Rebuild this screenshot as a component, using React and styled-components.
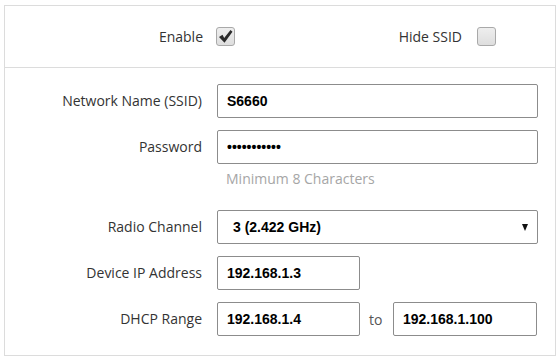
import React from "react";
import styled, { createGlobalStyle } from "styled-components";

const Global = createGlobalStyle`
  html, body { margin: 0; padding: 0; background: #fff; }
  body { font-family: "Open Sans", "Liberation Sans", sans-serif; }
  * { box-sizing: border-box; }
`;

const Page = styled.div`
  padding: 5px 3px 0 4px;
  width: 559px;
  height: 360px;
`;

const Panel = styled.div`
  width: 552px;
  height: 351px;
  border: 1px solid #dcdcdc;
  display: flex;
  flex-direction: column;
`;

const TopRow = styled.div`
  height: 62px;
  border-bottom: 1px solid #dcdcdc;
  display: flex;
  align-items: center;
  padding-right: 59px;
`;

const ToggleGroup = styled.div`
  display: flex;
  align-items: center;
  gap: ${(p) => p.$gap}px;
  margin-left: ${(p) => (p.$auto ? "auto" : "0")};
`;

const Label = styled.div`
  font-size: 14px;
  color: #333;
  text-align: right;
  line-height: 34px;
  white-space: nowrap;
  width: ${(p) => (p.$w ? `${p.$w}px` : "auto")};
`;

const Check = styled.div`
  width: 19px;
  height: 19px;
  border: 1px solid #a9a9a9;
  border-radius: 3px;
  background: linear-gradient(#eeeeee, #dedede);
  display: flex;
  align-items: center;
  justify-content: center;
`;

const Form = styled.div`
  flex: 1;
  display: grid;
  grid-template-columns: 197px 1fr;
  column-gap: 15px;
  row-gap: 12px;
  align-items: start;
  align-content: start;
  padding: 16px 16px 0 0;
`;

const Input = styled.input`
  height: 34px;
  width: ${(p) => p.$w}px;
  border: 1px solid #8c8c8c;
  border-radius: 2px;
  padding: 0 9px;
  font-family: "Liberation Sans", Arial, sans-serif;
  font-weight: bold;
  font-size: 14px;
  color: #000;
  background: #fff;
  outline: none;
`;

const Stack = styled.div`
  display: flex;
  flex-direction: column;
  gap: 6px;
  padding-bottom: 10px;
`;

const Hint = styled.div`
  font-size: 14px;
  line-height: 18px;
  color: #a6a6a6;
  padding-left: 9px;
`;

const Select = styled.div`
  height: 34px;
  width: 321px;
  border: 1px solid #8c8c8c;
  border-radius: 2px;
  padding: 0 9px 0 15px;
  display: flex;
  align-items: center;
  justify-content: space-between;
  font-family: "Liberation Sans", Arial, sans-serif;
  font-weight: bold;
  font-size: 14px;
  color: #000;
`;

const Caret = styled.span`
  width: 0;
  height: 0;
  border-left: 3.5px solid transparent;
  border-right: 3.5px solid transparent;
  border-top: 7px solid #111;
`;

const RangeRow = styled.div`
  display: flex;
  align-items: center;
`;

const To = styled.span`
  font-size: 14px;
  color: #555;
  width: 33px;
  padding-left: 9px;
`;

const CheckMark = () => (
  <svg width="16" height="15" viewBox="0 0 16 15">
    <path d="M1 8 L4.5 5.8 L6.2 9 L12.5 1 L14.5 2.8 L6.5 13.8 Z" fill="#2b2b2b" />
  </svg>
);

export default function App() {
  return (
    <Page>
      <Global />
      <Panel>
        <TopRow>
          <ToggleGroup $gap={13}>
            <Label $w={198}>Enable</Label>
            <Check>
              <CheckMark />
            </Check>
          </ToggleGroup>
          <ToggleGroup $gap={15} $auto>
            <Label>Hide SSID</Label>
            <Check />
          </ToggleGroup>
        </TopRow>
        <Form>
          <Label>Network Name (SSID)</Label>
          <Input $w={321} defaultValue="S6660" readOnly />
          <Label>Password</Label>
          <Stack>
            <Input $w={321} type="password" defaultValue="12345678901" readOnly />
            <Hint>Minimum 8 Characters</Hint>
          </Stack>
          <Label>Radio Channel</Label>
          <Select>
            <span>3 (2.422 GHz)</span>
            <Caret />
          </Select>
          <Label>Device IP Address</Label>
          <Input $w={143} defaultValue="192.168.1.3" readOnly />
          <Label>DHCP Range</Label>
          <RangeRow>
            <Input $w={143} defaultValue="192.168.1.4" readOnly />
            <To>to</To>
            <Input $w={144} defaultValue="192.168.1.100" readOnly />
          </RangeRow>
        </Form>
      </Panel>
    </Page>
  );
}
